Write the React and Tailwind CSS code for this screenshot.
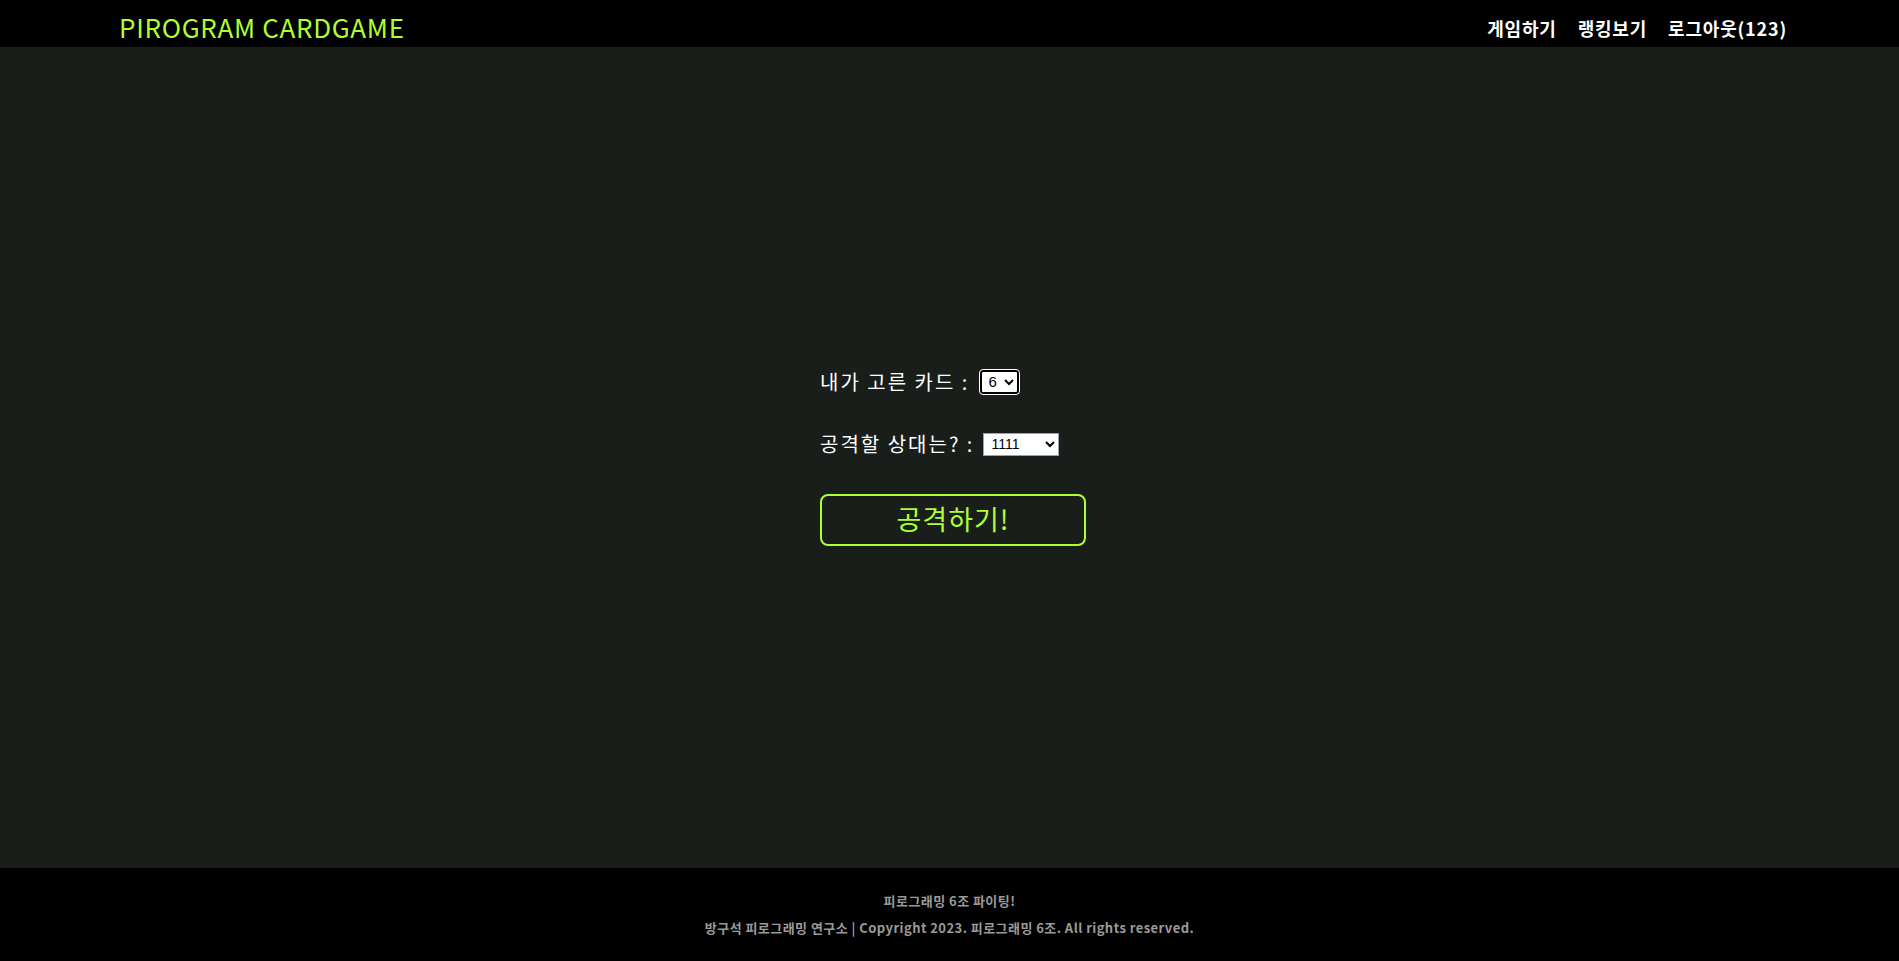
import React, { useState } from 'react';

const font = { fontFamily: '"Noto Sans CJK KR", "Noto Sans", sans-serif' };

const App = () => {
  const [card, setCard] = useState('6');
  const [target, setTarget] = useState('1111');

  return (
    <div className="min-h-screen flex flex-col bg-[#1a1e1b]" style={font}>
      <header className="h-[47px] bg-black flex items-end justify-between pl-[119px] pr-[112px]">
        <a href="#" className="text-[#adff2f] text-[26px] leading-none pb-[7px] tracking-[0.7px]">
          PIROGRAM CARDGAME
        </a>
        <nav className="flex gap-[21px] text-white font-bold text-[18px] leading-none pb-[10px] tracking-[0.8px]">
          <a href="#">게임하기</a>
          <a href="#">랭킹보기</a>
          <a href="#">로그아웃(123)</a>
        </nav>
      </header>

      <main className="h-[821px] flex items-center justify-center">
        <form className="w-[266px] ml-[7px] flex flex-col text-white text-[20px] tracking-[2px]" onSubmit={(e) => e.preventDefault()}>
          <div className="flex items-center h-[24px]">
            <span>내가 고른 카드 :</span>
            <select
              value={card}
              onChange={(e) => setCard(e.target.value)}
              className="ml-[11px] h-[24px] w-[39px] bg-white text-black text-[15px] tracking-normal border-2 border-black outline outline-1 outline-white rounded-[3px] pl-[2px]"
              style={{ fontFamily: '"Liberation Sans", Arial, sans-serif' }}
            >
              {[1, 2, 3, 4, 5, 6, 7, 8, 9, 10].map((n) => (
                <option key={n} value={n}>{n}</option>
              ))}
            </select>
          </div>

          <div className="flex items-center h-[23px] mt-[39px]">
            <span>공격할 상대는? :</span>
            <select
              value={target}
              onChange={(e) => setTarget(e.target.value)}
              className="ml-[9px] h-[23px] w-[76px] bg-white text-black text-[14px] tracking-normal border border-gray-400 pl-[3px]"
              style={{ fontFamily: '"Liberation Sans", Arial, sans-serif' }}
            >
              <option value="1111">1111</option>
              <option value="2222">2222</option>
            </select>
          </div>

          <button
            type="submit"
            className="mt-[38px] w-[266px] h-[52px] border-2 border-[#adff2f] rounded-[8px] text-[#adff2f] text-[27px] tracking-[1px] flex items-center justify-center"
          >
            공격하기!
          </button>
        </form>
      </main>

      <footer className="h-[93px] bg-black flex flex-col items-center pt-[26px] text-[#9a9a9a] font-bold text-[13px] leading-none gap-[14px] tracking-[0.45px]">
        <p>피로그래밍 6조 파이팅!</p>
        <p>방구석 피로그래밍 연구소 | Copyright 2023. 피로그래밍 6조. All rights reserved.</p>
      </footer>
    </div>
  );
};

export default App;
